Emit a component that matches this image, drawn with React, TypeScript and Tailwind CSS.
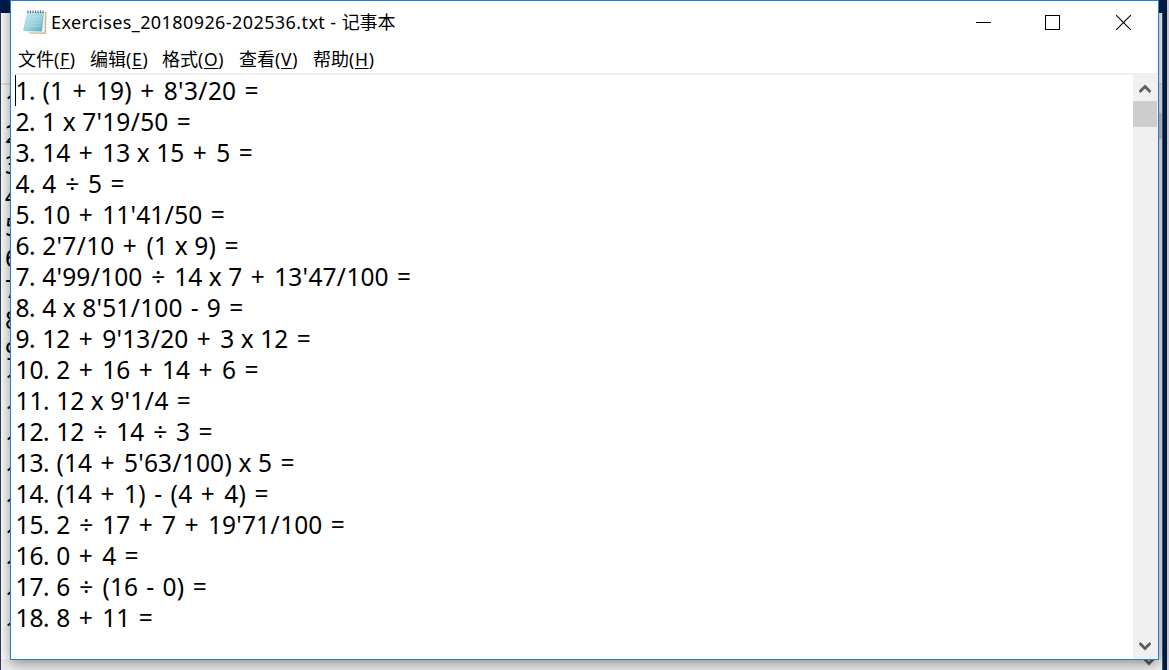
import { Fragment } from 'react';

const lines = [
  "1. (1 + 19) + 8'3/20 =",
  "2. 1 x 7'19/50 =",
  '3. 14 + 13 x 15 + 5 =',
  '4. 4 ÷ 5 =',
  "5. 10 + 11'41/50 =",
  "6. 2'7/10 + (1 x 9) =",
  "7. 4'99/100 ÷ 14 x 7 + 13'47/100 =",
  "8. 4 x 8'51/100 - 9 =",
  "9. 12 + 9'13/20 + 3 x 12 =",
  '10. 2 + 16 + 14 + 6 =',
  "11. 12 x 9'1/4 =",
  '12. 12 ÷ 14 ÷ 3 =',
  "13. (14 + 5'63/100) x 5 =",
  '14. (14 + 1) - (4 + 4) =',
  "15. 2 ÷ 17 + 7 + 19'71/100 =",
  '16. 0 + 4 =',
  '17. 6 ÷ (16 - 0) =',
  '18. 8 + 11 =',
];

const menus = [
  { label: '文件', hotkey: 'F', width: 'w-[72px]' },
  { label: '编辑', hotkey: 'E', width: 'w-[72px]' },
  { label: '格式', hotkey: 'O', width: 'w-[77px]' },
  { label: '查看', hotkey: 'V', width: 'w-[74px]' },
  { label: '帮助', hotkey: 'H', width: 'w-[74px]' },
];

const operatorClass: Record<string, string> = {
  '+': 'pl-[1.4px] pr-[2.4px]',
  '÷': 'px-[1.9px]',
  '=': 'pl-[1.4px] pr-[2.4px]',
  '-': 'px-[1.2px]',
  '/': 'px-[0.45px]',
  "'": 'px-[0.25px]',
  '(': 'px-[0.25px]',
  ')': 'px-[0.25px]',
  x: '-mx-[0.5px]',
  '.': '-ml-[0.5px] -mr-[0.5px]',
};

const Line = ({ text }: { text: string }) => (
  <div className="h-[31px] whitespace-pre">
    {text.split(/([+÷=\-x./'()])/).map((part, i) =>
      operatorClass[part] ? (
        <span key={i} className={operatorClass[part]}>{part}</span>
      ) : (
        <Fragment key={i}>{part}</Fragment>
      )
    )}
  </div>
);

const NotepadIcon = () => (
  <svg width="26" height="26" viewBox="0 0 26 26">
    <defs>
      <linearGradient id="page" x1="0" y1="0" x2="1" y2="1">
        <stop offset="0" stopColor="#c9edf3" />
        <stop offset="0.5" stopColor="#9bd3df" />
        <stop offset="1" stopColor="#58a9bd" />
      </linearGradient>
    </defs>
    <path d="M6 4L24.5 3L24 25L7 24.5Z" fill="#c9b998" />
    <path d="M6 3L23 3L22.5 23.5L5 23.5Z" fill="#f5f5ee" />
    <path d="M5 3L22 3L20 22.5L1 22Z" fill="url(#page)" />
    <path d="M5 8H20M4.5 11H20M4 14H19.5M3.5 17H19" stroke="#d4f1f5" strokeWidth="0.7" opacity="0.6" />
    <path d="M6 1.5V4M8.5 1.5V4M11 1.5V4M13.5 1.5V4M16 1.5V4M18.5 1.5V4M21 1.5V4" stroke="#59666b" strokeWidth="1.1" />
  </svg>
);

const Chevron = ({ down = false }: { down?: boolean }) => (
  <svg width="12" height="10" viewBox="0 0 12 10" className={down ? 'rotate-180' : ''}>
    <path d="M0.5 8L6 2.5L11.5 8" fill="none" stroke="#606060" strokeWidth="3" />
  </svg>
);

const TitleBar = () => (
  <div className="flex h-[43px] items-center">
    <div className="mb-[2px] ml-[11px] flex w-[29px]">
      <NotepadIcon />
    </div>
    <div className="mb-[2px] flex-1 whitespace-pre font-['Noto_Sans',sans-serif] text-[18px] leading-[24px] text-black">
      <span className="tracking-[0.41px]">Exercises_20180926-202536.txt - </span>
      <span className="font-['Noto_Sans_CJK_SC',sans-serif]">记事本</span>
    </div>
    <div className="mr-[27px] flex items-center gap-[54px]">
      <svg width="15" height="15" viewBox="0 0 15 15" shapeRendering="crispEdges">
        <path d="M0 7.5H15" stroke="#000" />
      </svg>
      <svg width="15" height="15" viewBox="0 0 15 15" shapeRendering="crispEdges">
        <rect x="0.5" y="0.5" width="14" height="14" fill="none" stroke="#000" />
      </svg>
      <svg width="15" height="15" viewBox="0 0 15 15" className="ml-[2px]">
        <path d="M0 0L15 15M15 0L0 15" stroke="#000" strokeWidth="1.1" />
      </svg>
    </div>
  </div>
);

const MenuBar = () => (
  <div className="flex h-[30px] pl-[7px] font-['Noto_Sans',sans-serif] text-[17.5px] leading-[28px] text-black">
    {menus.map((menu) => (
      <div key={menu.hotkey} className={`${menu.width} whitespace-nowrap`}>
        <span className="font-['Noto_Sans_CJK_SC',sans-serif] text-[18px]">{menu.label}</span>
        <span className="tracking-[0.7px]">
          (<span className="underline decoration-1 underline-offset-2">{menu.hotkey}</span>)
        </span>
      </div>
    ))}
  </div>
);

const App = () => {
  return (
    <div className="relative h-[670px] w-[1169px] overflow-hidden bg-[#001c4b]">
      <div className="absolute right-0 top-0 h-full w-[2px] bg-[#d5d0d9]" />

      {/* window behind, only its edges show */}
      <div className="absolute left-0 top-[13px] flex h-[657px] w-[1163px] flex-col border-l border-r border-l-[#2c3b58] border-r-[#4c5a62] bg-white">
        <div className="h-[72px] border-b-2 border-[#e4e4e4]" />
        <div className="flex min-h-0 flex-1 justify-between overflow-hidden">
          <div className="w-[9px] overflow-hidden pl-[4px] pt-[2px] font-['Noto_Sans',sans-serif] text-[24.5px] leading-[31px] text-black">
            {lines.map((line) => (
              <div key={line} className="h-[31px]">{line[0]}</div>
            ))}
          </div>
          <div className="flex w-[26px] flex-col items-center bg-[#f0f0f0]">
            <div className="h-[28px]" />
            <div className="h-[26px] w-full bg-[#cdcdcd]" />
            <div className="mb-[4px] mt-auto">
              <Chevron down />
            </div>
          </div>
        </div>
        <div className="absolute bottom-0 left-0 h-[11px] w-[1137px] bg-[#f0f0f0]" />
      </div>

      <div className="absolute left-[10px] top-0 flex h-[660px] w-[1149px] flex-col border border-[#1883d7] bg-white shadow-[0_3px_14px_rgba(0,0,0,0.45)]">
        <TitleBar />
        <MenuBar />
        <div className="h-[2px] shrink-0 -mt-px bg-[#f0f0f0]" />
        <div className="flex min-h-0 flex-1">
          <div className="relative flex-1 pl-[4.5px] font-['Noto_Sans',sans-serif] text-[24.5px] leading-[31px] [word-spacing:0.7px] text-black">
            <div className="absolute left-[4px] top-0 h-[31px] w-px bg-black" />
            {lines.map((line) => (
              <Line key={line} text={line} />
            ))}
          </div>
          <div className="flex w-[25px] flex-col bg-[#f0f0f0] pr-px">
            <div className="flex h-[26px] items-center justify-center pt-[2px]">
              <Chevron />
            </div>
            <div className="h-[26px] bg-[#cdcdcd]" />
            <div className="mb-[8px] mt-auto flex justify-center">
              <Chevron down />
            </div>
          </div>
        </div>
      </div>
    </div>
  );
};

export default App;
